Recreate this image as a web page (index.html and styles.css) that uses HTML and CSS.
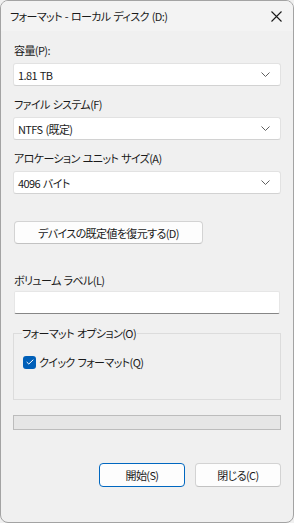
FILE: index.html
```html
<!DOCTYPE html>
<html lang="ja">
<head>
  <meta charset="UTF-8" />
  <meta name="viewport" content="width=device-width, initial-scale=1.0"/>
  <title>フォーマット - ローカル ディスク (D:)</title>
  <link rel="stylesheet" href="styles.css">
</head>
<body>
  <div class="window">
    <div class="titlebar">
      <span class="title">フォーマット - ローカル ディスク (D:)</span>
      <button class="close" aria-label="閉じる">
        <svg width="11" height="11" viewBox="0 0 11 11"><path d="M0.5 0.5 L10.5 10.5 M10.5 0.5 L0.5 10.5" stroke="#1a1a1a" stroke-width="1.1" fill="none"/></svg>
      </button>
    </div>

    <div class="content">
      <label class="label first">容量(P):</label>
      <div class="combo">
        <span>1.81 TB</span>
        <svg class="chev" width="9" height="5" viewBox="0 0 9 5"><path d="M0.5 0.5 L4.5 4.5 L8.5 0.5" stroke="#5f5f5f" fill="none"/></svg>
      </div>

      <label class="label">ファイル システム(F)</label>
      <div class="combo">
        <span>NTFS (既定)</span>
        <svg class="chev" width="9" height="5" viewBox="0 0 9 5"><path d="M0.5 0.5 L4.5 4.5 L8.5 0.5" stroke="#5f5f5f" fill="none"/></svg>
      </div>

      <label class="label">アロケーション ユニット サイズ(A)</label>
      <div class="combo">
        <span>4096 バイト</span>
        <svg class="chev" width="9" height="5" viewBox="0 0 9 5"><path d="M0.5 0.5 L4.5 4.5 L8.5 0.5" stroke="#5f5f5f" fill="none"/></svg>
      </div>

      <button class="btn restore">デバイスの既定値を復元する(D)</button>

      <label class="label volume">ボリューム ラベル(L)</label>
      <div class="textbox"></div>

      <fieldset class="group">
        <legend>フォーマット オプション(O)</legend>
        <div class="check-row">
          <span class="checkbox">
            <svg width="8" height="6" viewBox="0 0 8 6"><path d="M0.7 3 L2.8 5 L7.3 0.7" stroke="#fff" stroke-width="1" fill="none"/></svg>
          </span>
          <span>クイック フォーマット(Q)</span>
        </div>
      </fieldset>

      <div class="progress"></div>

      <div class="actions">
        <button class="btn primary">開始(S)</button>
        <button class="btn">閉じる(C)</button>
      </div>
    </div>
  </div>
</body>
</html>
```

FILE: styles.css
```css
* {
  box-sizing: border-box;
}

body {
  margin: 0;
  padding: 0;
  background: #f0f0f0;
  font-family: 'Noto Sans CJK JP', 'Noto Sans', sans-serif;
  font-feature-settings: "palt";
  font-size: 11px;
  letter-spacing: -0.6px;
  word-spacing: 1px;
  color: #1a1a1a;
}

.window {
  width: 294px;
  height: 523px;
  border: 1px solid #a3a3a3;
  border-radius: 8px;
  background: #f0f0f0;
  overflow: hidden;
}

.titlebar {
  height: 30px;
  display: flex;
  align-items: center;
  justify-content: space-between;
  padding-left: 9px;
  background: #f3f3f3;
}

.title {
  line-height: 16px;
  margin-top: -1px;
}

.close {
  width: 30px;
  height: 30px;
  margin-right: 2px;
  border: none;
  background: transparent;
  display: flex;
  align-items: center;
  justify-content: center;
  padding: 0;
}

.content {
  display: flex;
  flex-direction: column;
  padding: 0 12px;
}

.label {
  line-height: 16px;
  margin: 10px 0 5px 1px;
}

.label.first {
  margin-top: 11px;
}

.combo {
  height: 23px;
  background: #fff;
  border: 1px solid #e2e2e2;
  border-bottom-color: #d2d2d2;
  border-radius: 3px;
  display: flex;
  align-items: center;
  justify-content: space-between;
  padding: 0 10px 0 4px;
}

.combo span {
  line-height: 16px;
}

.btn {
  font-family: inherit;
  font-feature-settings: "palt";
  font-size: 11px;
  letter-spacing: -0.6px;
  word-spacing: 1px;
  color: #1a1a1a;
  height: 24px;
  background: #fdfdfd;
  border: 1px solid #d3d3d3;
  border-bottom-color: #c2c2c2;
  border-radius: 4px;
  padding: 0;
}

.restore {
  width: 189px;
  margin: 27px 0 0 1px;
  height: 23px;
}

.label.volume {
  margin-top: 28px;
  margin-bottom: 3px;
}

.textbox {
  height: 23px;
  margin: 0 1px;
  background: #fff;
  border: 1px solid #e6e6e6;
  border-bottom: 1px solid #868686;
  border-radius: 2px;
}

.group {
  margin: 11px 0 0 0;
  padding: 13px 8px 0 9px;
  height: 75px;
  border: 1px solid #dcdcdc;
}

.group legend {
  padding: 0 1px 0 0;
  margin-left: -1px;
  line-height: 16px;
}

.check-row {
  display: flex;
  align-items: center;
  gap: 3px;
}

.checkbox {
  width: 13px;
  height: 13px;
  border-radius: 3px;
  background: #005fb8;
  display: flex;
  align-items: center;
  justify-content: center;
}

.progress {
  margin-top: 15px;
  height: 15px;
  background: #e6e6e6;
  border: 1px solid #bcbcbc;
}

.actions {
  display: flex;
  justify-content: flex-end;
  gap: 10px;
  margin-top: 33px;
}

.actions .btn {
  width: 86px;
}

.btn.primary {
  border: 1px solid #0067c0;
}
```
